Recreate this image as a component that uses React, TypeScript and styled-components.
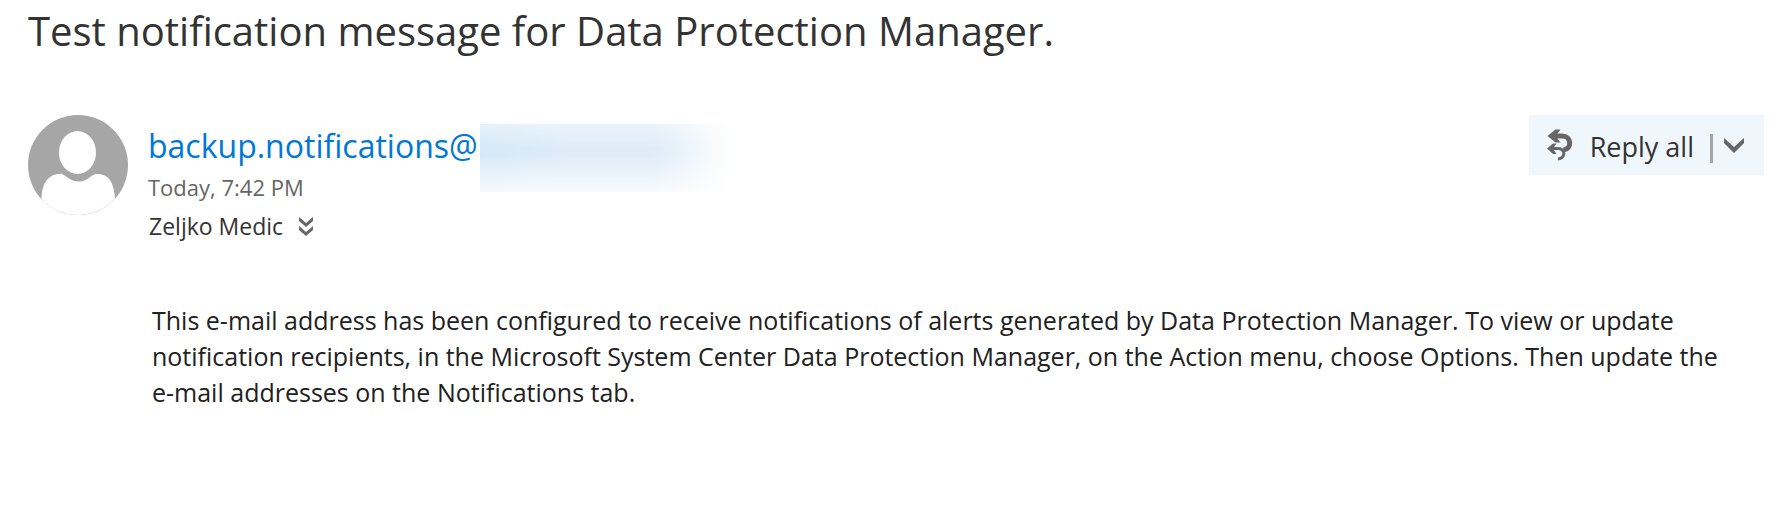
import React from 'react';
import styled, { createGlobalStyle } from 'styled-components';

const GlobalStyle = createGlobalStyle`
  * { box-sizing: border-box; }
  body {
    margin: 0;
    background: #fff;
    color: #333;
    font-family: "Segoe UI", "Open Sans", "Noto Sans", sans-serif;
  }
`;

const Message = styled.main`
  padding: 0 20px 60px 28px;
`;

const Subject = styled.h1`
  margin: 0;
  font-size: 40px;
  font-weight: 400;
  line-height: 62px;
`;

const Header = styled.header`
  display: flex;
  align-items: flex-start;
  margin-top: 53px;
`;

const Avatar = styled.svg`
  flex: none;
  width: 100px;
  height: 100px;
`;

const Details = styled.div`
  flex: 1;
  min-width: 0;
  padding: 9px 0 0 20px;
`;

const SenderRow = styled.div`
  display: flex;
  align-items: flex-start;
  height: 44px;
`;

const Sender = styled.a`
  color: #0078d7;
  font-size: 32px;
  line-height: 44px;
  text-decoration: none;
`;

const HiddenDomain = styled.span`
  width: 246px;
  height: 68px;
  margin-left: 2px;
  background:
    linear-gradient(to right, transparent 70%, #fffc 100%),
    linear-gradient(to bottom, #fff6, transparent 35%, transparent 45%, #fffc 100%),
    linear-gradient(to right, #d5e9f8, #deecf8 35%, #deecf8 80%, #eef4fc);
`;

const Time = styled.time`
  display: block;
  width: max-content;
  color: #666;
  font-size: 22px;
  line-height: 38px;
`;

const Recipient = styled.div`
  display: flex;
  align-items: center;
  gap: 16px;
  padding-left: 1px;
  font-size: 23px;
  line-height: 40px;
`;

const IconButton = styled.button`
  display: flex;
  padding: 0;
  border: 0;
  background: none;
  color: #666;
`;

const Actions = styled.div`
  display: flex;
  flex: none;
  align-items: center;
  height: 60px;
  background: #eff6fc;
`;

const ReplyButton = styled.button`
  display: flex;
  align-items: center;
  gap: 17px;
  height: 60px;
  padding: 4px 16px 0 18px;
  border: 0;
  background: none;
  color: #333;
  font-family: inherit;
  font-size: 27px;
  line-height: 36px;

  svg {
    margin-bottom: 4px;
  }
`;

const Separator = styled.span`
  width: 3px;
  height: 29px;
  margin-top: 6px;
  background: #a6a6a6;
`;

const MoreButton = styled(IconButton)`
  height: 60px;
  padding: 0 20px 0 11px;
  align-items: center;
`;

const Body = styled.p`
  margin: 0;
  padding: 56px 30px 0 124px;
  color: #212121;
  font-size: 25px;
  line-height: 36px;
`;

export default function App() {
  return (
    <>
      <GlobalStyle />
      <Message>
        <Subject>Test notification message for Data Protection Manager.</Subject>
        <Header>
          <Avatar viewBox="0 0 100 100" aria-hidden="true">
            <circle cx="50" cy="50" r="50" fill="#a6a6a6" />
            <ellipse cx="49.5" cy="37.5" rx="18.5" ry="21.5" fill="#fff" />
            <path
              d="M13.5 84C14 68 20 59 33 58.7C38 60 42 66.500 51 66.500C60 66.500 63 59 69 59C82 59 86 69 87 83.500A49.700 49.700 0 0 1 13.500 84Z"
              fill="#fff"
            />
          </Avatar>
          <Details>
            <SenderRow>
              <Sender href="#sender">backup.notifications@</Sender>
              <HiddenDomain />
            </SenderRow>
            <Time>Today, 7:42 PM</Time>
            <Recipient>
              Zeljko Medic
              <IconButton aria-label="Show details">
                <svg width="14" height="19" viewBox="0 0 14 19" fill="currentColor">
                  <path d="M0 0L7 6L14 0V4L7 10L0 4Z" />
                  <path d="M0 9L7 15L14 9V13L7 19L0 13Z" />
                </svg>
              </IconButton>
            </Recipient>
          </Details>
          <Actions>
            <ReplyButton>
              <svg width="26" height="32" viewBox="0 0 26 32" fill="none" stroke="#666" aria-hidden="true">
                <path d="M6 7H15C25 7 25 20 16.500 21" strokeWidth="5" />
                <path d="M0.500 7L8.500 0.500H13.500L8.500 7L13.500 13.500H8.500Z" fill="#666" stroke="none" />
                <path d="M4 19.500H11C19 19.500 18.500 29.500 11 30" strokeWidth="3" />
                <path d="M0 19.500L6 14.500H9.500L6 19.500L9.500 25H6Z" fill="#666" stroke="none" />
              </svg>
              Reply all
            </ReplyButton>
            <Separator />
            <MoreButton aria-label="More reply options">
              <svg width="20" height="15" viewBox="0 0 20 15" fill="currentColor">
                <path d="M0 0L10 9L20 0V5L10 15L0 5Z" />
              </svg>
            </MoreButton>
          </Actions>
        </Header>
        <Body>
          This e-mail address has been configured to receive notifications of alerts generated by Data
          Protection Manager. To view or update notification recipients, in the Microsoft System Center
          Data Protection Manager, on the Action menu, choose Options. Then update the e-mail addresses
          on the Notifications tab.
        </Body>
      </Message>
    </>
  );
}
